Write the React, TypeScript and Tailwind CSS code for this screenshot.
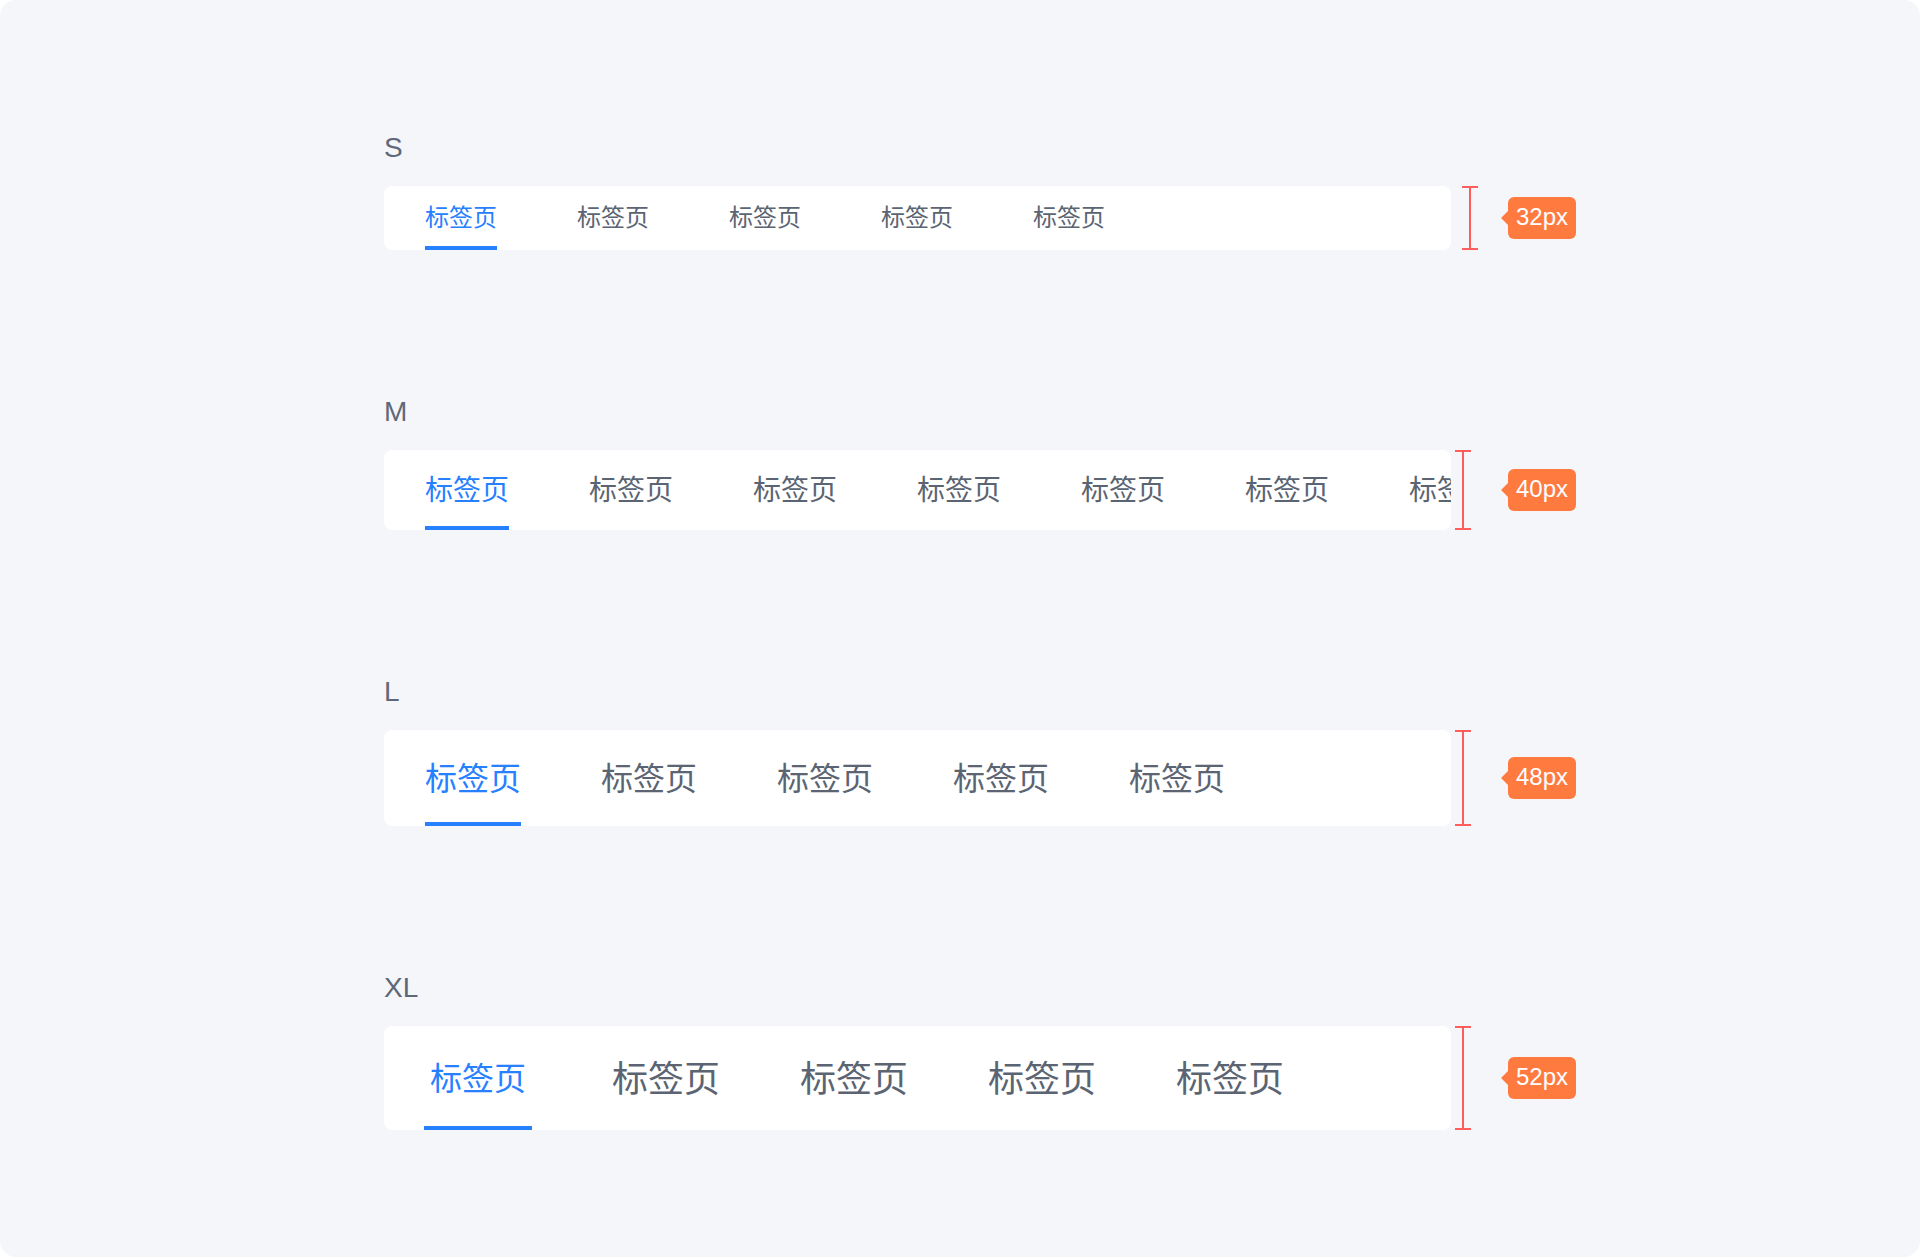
import React from "react";

type Size = {
  label: string;
  badge: string;
  cardH: string;
  textCls: string;
  activeCls: string;
  tabW: string;
  count: number;
  padL: string;
  bracketMl: string;
  badgeMl: string;
};

const sizes: Size[] = [
  {
    label: "S",
    badge: "32px",
    cardH: "h-[64px]",
    textCls: "text-[24px]",
    activeCls: "text-[24px]",
    tabW: "w-[72px]",
    count: 5,
    padL: "pl-[41px]",
    bracketMl: "ml-[11px]",
    badgeMl: "ml-[23px]",
  },
  {
    label: "M",
    badge: "40px",
    cardH: "h-[80px]",
    textCls: "text-[28px]",
    activeCls: "text-[28px]",
    tabW: "w-[84px]",
    count: 7,
    padL: "pl-[41px]",
    bracketMl: "ml-[4px]",
    badgeMl: "ml-[30px]",
  },
  {
    label: "L",
    badge: "48px",
    cardH: "h-[96px]",
    textCls: "text-[32px]",
    activeCls: "text-[32px]",
    tabW: "w-[96px]",
    count: 5,
    padL: "pl-[41px]",
    bracketMl: "ml-[4px]",
    badgeMl: "ml-[30px]",
  },
  {
    label: "XL",
    badge: "52px",
    cardH: "h-[104px]",
    textCls: "text-[36px]",
    activeCls: "text-[32px]",
    tabW: "w-[108px]",
    count: 5,
    padL: "pl-[40px]",
    bracketMl: "ml-[4px]",
    badgeMl: "ml-[30px]",
  },
];

const cjk = "font-['Noto_Sans_CJK_SC',sans-serif]";

function Section({ s }: { s: Size }) {
  return (
    <div className="flex flex-col">
      <div className="h-[40px] leading-[40px] text-[28px] text-[#5f6878] font-['Liberation_Sans',Arial,sans-serif]">
        {s.label}
      </div>
      <div className="mt-[18px] flex items-stretch">
        <div
          className={`w-[1067px] ${s.cardH} bg-white rounded-[8px] overflow-hidden flex items-stretch ${s.padL} gap-[80px]`}
        >
          {Array.from({ length: s.count }).map((_, i) => (
            <div
              key={i}
              className={`relative shrink-0 ${s.tabW} pb-[5px] flex items-center justify-center ${cjk} leading-none whitespace-nowrap ${
                i === 0 ? `${s.activeCls} text-[#2680ff]` : `${s.textCls} text-[#5b6472]`
              }`}
            >
              标签页
              {i === 0 && (
                <div className="absolute left-0 right-0 bottom-0 h-[4px] bg-[#2680ff]" />
              )}
            </div>
          ))}
        </div>
        <div className={`${s.bracketMl} w-[16px] flex flex-col items-center`}>
          <div className="w-[16px] h-[2px] bg-[#ff5c5c]" />
          <div className="w-[2px] flex-1 bg-[#ff5c5c]" />
          <div className="w-[16px] h-[2px] bg-[#ff5c5c]" />
        </div>
        <div className={`${s.badgeMl} self-center flex items-center`}>
          <div className="w-0 h-0 border-y-[7px] border-y-transparent border-r-[7px] border-r-[#ff7a3f]" />
          <div className="w-[68px] h-[42px] pb-[2px] rounded-[6px] bg-[#ff7a3f] text-white text-[24px] flex items-center justify-center font-['Liberation_Sans',Arial,sans-serif]">
            {s.badge}
          </div>
        </div>
      </div>
    </div>
  );
}

export default function App() {
  return (
    <div className="w-[1920px] h-[1258px] bg-white">
      <div className="w-[1920px] h-[1257px] bg-[#f5f6fa] rounded-[16px] pt-[128px] pl-[384px] flex flex-col gap-[142px]">
        {sizes.map((s) => (
          <Section key={s.label} s={s} />
        ))}
      </div>
    </div>
  );
}
